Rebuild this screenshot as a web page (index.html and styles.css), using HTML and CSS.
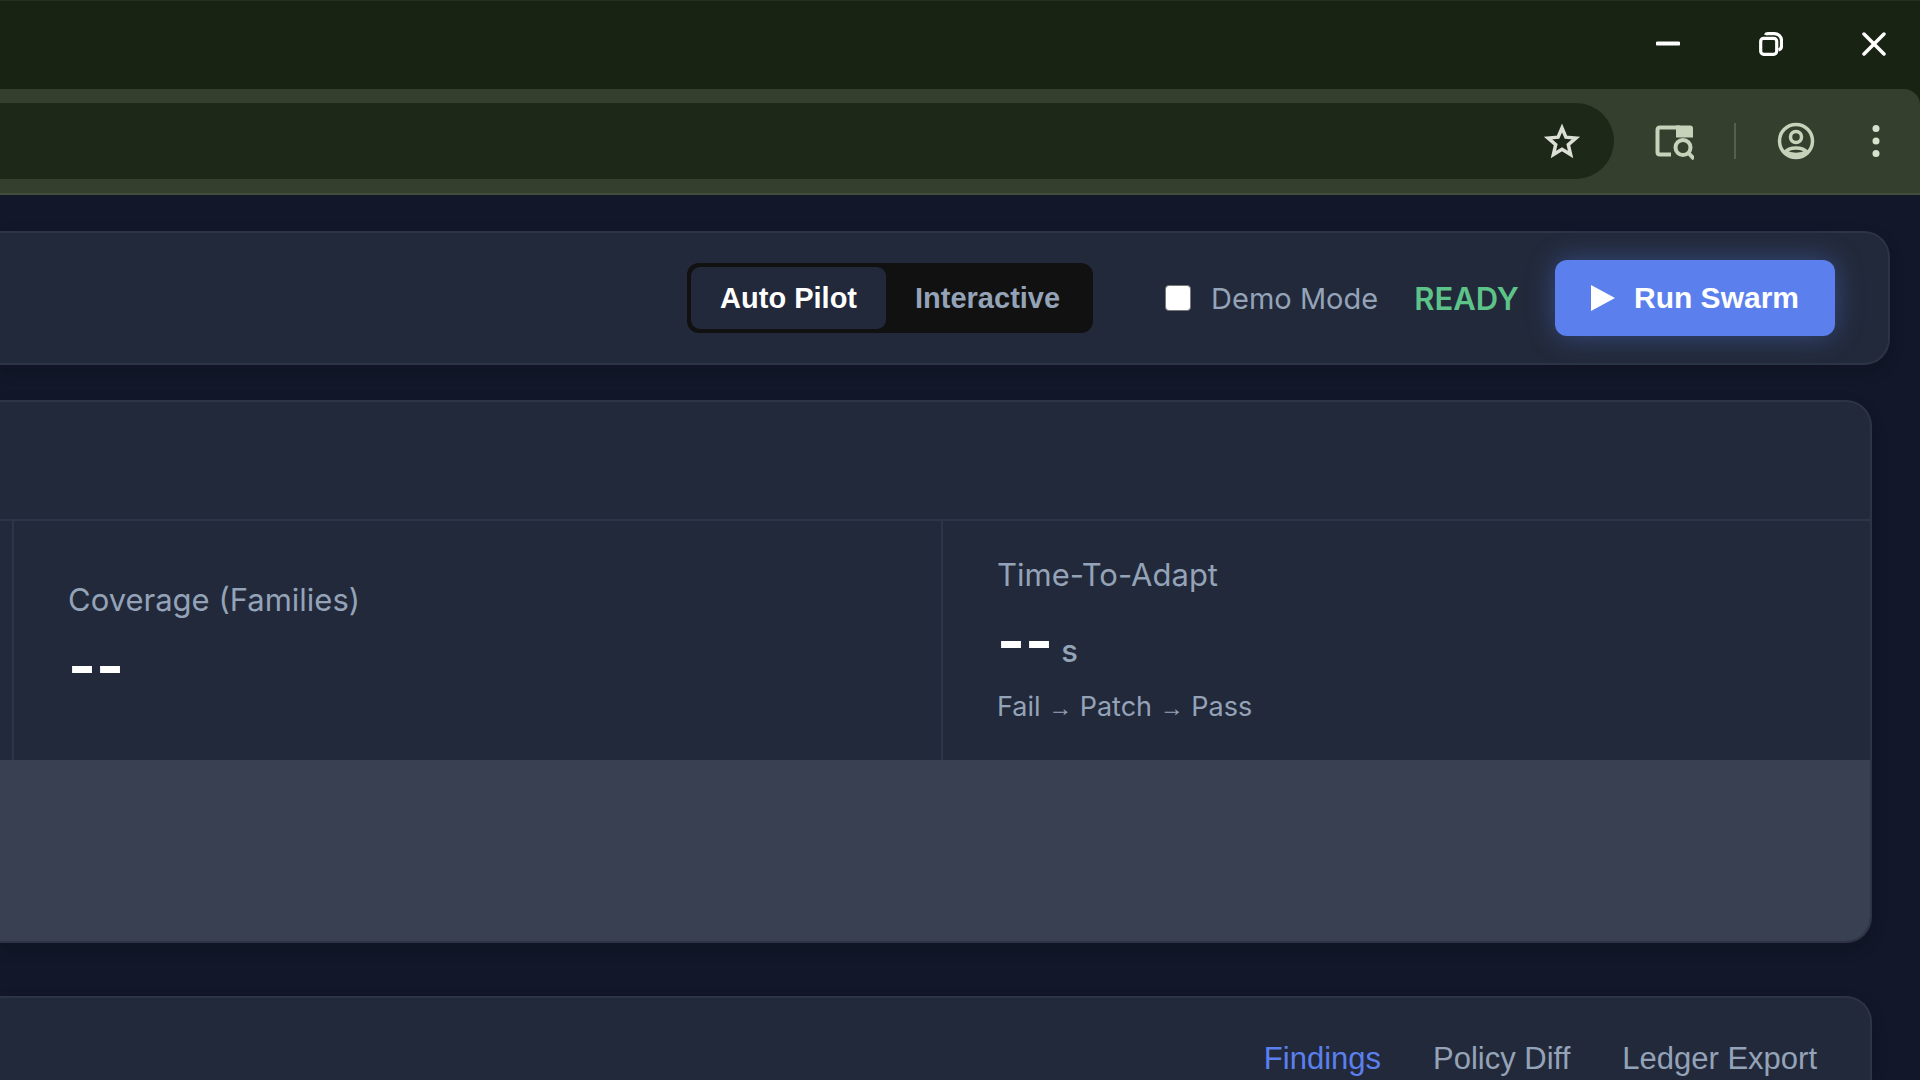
FILE: index.html
```html
<!DOCTYPE html>
<html lang="en">
<head>
    <meta charset="UTF-8">
    <title>Swarm Dashboard</title>
    <link rel="stylesheet" href="styles.css">
</head>
<body>
    <div class="titlebar">
        <button class="icon-btn" aria-label="Minimize">
            <svg width="24" height="24" viewBox="0 0 24 24"><path d="M1.500 11.500h21" stroke="#fff" stroke-width="4" stroke-linecap="round"/></svg>
        </button>
        <button class="icon-btn" aria-label="Restore">
            <svg width="24" height="24" viewBox="0 0 24 24" fill="none" stroke="#fff" stroke-width="3.200"><rect x="1.700" y="6.300" width="16" height="16" rx="3"/><path d="M6.500 3Q7 1.600 9 1.600h6.500a7 7 0 0 1 7 7v5.500q0 3-3 4"/></svg>
        </button>
        <button class="icon-btn" aria-label="Close">
            <svg width="24" height="24" viewBox="0 0 24 24"><path d="M2 2l20 20M22 2l-20 20" stroke="#fff" stroke-width="3.500" stroke-linecap="round"/></svg>
        </button>
    </div>

    <div class="toolbar-wrap">
    <div class="toolbar">
        <div class="omnibox">
            <button class="icon-btn" aria-label="Bookmark this tab">
                <svg width="40" height="40" viewBox="0 0 40 40" fill="none" stroke="#dbdfd6" stroke-width="3.500"><path d="M20 7l3.900 9.200 10 .9-7.600 6.600 2.300 9.800-8.600-5.200-8.600 5.200 2.300-9.800-7.600-6.600 10-.9z"/></svg>
            </button>
        </div>
        <button class="icon-btn" aria-label="Search tabs">
            <svg width="40" height="40" viewBox="0 0 40 40" fill="none" stroke="#c6d2b9" stroke-width="4"><path d="M17 33.500H6q-2.500 0-2.500-2.500V9q0-2.500 2.500-2.500h20"/><path d="M22 4.500h14q3 0 3 3v9H22z" fill="#c6d2b9" stroke="none"/><circle cx="29" cy="26.500" r="7.500"/><path d="M34 31.500l6 6.500"/></svg>
        </button>
        <span class="separator"></span>
        <button class="icon-btn" aria-label="Profile">
            <svg width="40" height="40" viewBox="0 0 40 40" fill="none" stroke="#c6d2b9" stroke-width="3.500"><circle cx="20" cy="20" r="16.500"/><circle cx="20" cy="16" r="5.500"/><path d="M8.500 31.500c5-6 18-6 23 0M9 30.500c6 4 16 4 22 0"/></svg>
        </button>
        <button class="icon-btn" aria-label="Menu">
            <svg width="40" height="40" viewBox="0 0 40 40" fill="#d7e2cc"><circle cx="20" cy="7.500" r="3.500"/><circle cx="20" cy="20" r="3.500"/><circle cx="20" cy="32.500" r="3.500"/></svg>
        </button>
    </div>
    </div>

    <main>
        <header class="topbar">
            <div class="mode-toggle">
                <button class="mode active">Auto Pilot</button>
                <button class="mode">Interactive</button>
            </div>
            <label class="demo" for="demoMode"><input type="checkbox" id="demoMode">Demo Mode</label>
            <span class="status">READY</span>
            <button class="run-btn">
                <svg width="24" height="26" viewBox="0 0 24 26"><path d="M0 0l24 13-24 13z" fill="#fff"/></svg>
                Run Swarm
            </button>
        </header>

        <section class="panel metrics">
            <div class="panel-head"></div>
            <div class="metric-grid">
                <div class="metric"></div>
                <div class="metric">
                    <div class="metric-label">Coverage (Families)</div>
                    <div class="metric-value">--</div>
                </div>
                <div class="metric">
                    <div class="metric-label">Time-To-Adapt</div>
                    <div class="metric-value">--<span class="unit">s</span></div>
                    <div class="metric-note">Fail <span class="arrow">→</span> Patch <span class="arrow">→</span> Pass</div>
                </div>
            </div>
            <div class="metric-rest"></div>
        </section>

        <section class="panel results">
            <nav class="tabs">
                <button class="tab active">Findings</button>
                <button class="tab">Policy Diff</button>
                <button class="tab">Ledger Export</button>
            </nav>
        </section>
    </main>
</body>
</html>
```

FILE: styles.css
```css
* {
    box-sizing: border-box;
}

body {
    display: flex;
    flex-direction: column;
    margin: 0;
    height: 100vh;
    overflow: hidden;
    background: #121729;
    color: #94a3b8;
    font-family: Inter, "Liberation Sans", sans-serif;
}

button {
    border: none;
    background: none;
    padding: 0;
    cursor: pointer;
    font-family: "Liberation Sans", Arial, sans-serif;
}

.icon-btn,
.icon-btn svg {
    display: block;
}

/* browser window */
.titlebar {
    display: flex;
    flex-shrink: 0;
    justify-content: flex-end;
    align-items: center;
    gap: 79px;
    height: 89px;
    padding: 0 34px 2px 0;
    background: #192313;
    border-top: 1px solid #27301f;
}

.toolbar-wrap {
    flex-shrink: 0;
    background: #192313;
}

.toolbar {
    display: flex;
    align-items: center;
    gap: 40px;
    height: 106px;
    padding-right: 24px;
    background: #353f2e;
    border-bottom: 2px solid #434b3d;
    border-top-right-radius: 16px;
}

.omnibox {
    flex: 1;
    display: flex;
    justify-content: flex-end;
    align-items: center;
    height: 76px;
    padding-right: 32px;
    background: #1e2819;
    border-radius: 0 38px 38px 0;
}

.separator {
    width: 2px;
    height: 36px;
    background: #53604a;
}

/* dashboard */
main {
    flex: 1;
    display: flex;
    flex-direction: column;
    min-height: 0;
    padding-top: 36px;
}

.topbar {
    display: flex;
    flex-shrink: 0;
    justify-content: flex-end;
    align-items: center;
    gap: 36px;
    height: 134px;
    margin-right: 30px;
    padding-right: 53px;
    background: #22293a;
    border: 2px solid #2c3446;
    border-left: none;
    border-radius: 0 26px 26px 0;
    box-shadow: 0 6px 16px rgba(0, 0, 0, 0.15);
}

.mode-toggle {
    display: flex;
    height: 70px;
    margin-right: 36px;
    padding: 4px;
    background: #111;
    border-radius: 12px;
}

.mode {
    padding: 0 29px;
    border-radius: 9px;
    color: #94a3b8;
    font-size: 29px;
    font-weight: bold;
}

.mode.active {
    background: #22293a;
    color: #fff;
}

.demo {
    display: flex;
    align-items: center;
    gap: 20px;
    font-size: 29px;
}

.demo input {
    appearance: none;
    width: 26px;
    height: 26px;
    margin: 0;
    background: #fff;
    border: 1px solid #767676;
    border-radius: 4px;
}

.demo input:checked {
    background: #5b80ee;
}

.status {
    color: #5dc389;
    font-size: 31px;
    font-weight: 600;
}

.run-btn {
    display: flex;
    align-items: center;
    gap: 19px;
    height: 76px;
    padding: 0 36px;
    background: #5b80ee;
    border-radius: 12px;
    box-shadow: 0 0 28px rgba(91, 128, 238, 0.4);
    color: #fff;
    font-size: 30px;
    font-weight: bold;
}

.panel {
    flex-shrink: 0;
    margin-right: 48px;
    background: #22293a;
    border: 2px solid #2c3446;
    border-left: none;
    border-radius: 0 26px 26px 0;
    box-shadow: 0 6px 16px rgba(0, 0, 0, 0.15);
    overflow: hidden;
}

.metrics {
    margin-top: 35px;
}

.panel-head {
    height: 119px;
    border-bottom: 2px solid #2c3648;
}

.metric-grid {
    display: grid;
    grid-template-columns: 12px 1fr 1fr;
    gap: 2px;
    height: 239px;
    background: #2c3648;
}

.metric {
    display: flex;
    flex-direction: column;
    justify-content: center;
    background: #22293a;
}

.metric + .metric {
    padding: 0 54px;
}

.metric-label {
    font-size: 31px;
    line-height: 38px;
}

.metric-value {
    margin-top: 10px;
    color: #fff;
    font-size: 60px;
    font-weight: 700;
    line-height: 72px;
}

.unit {
    margin-left: 8px;
    color: #94a3b8;
    font-size: 31px;
    font-weight: 500;
}

.metric-note {
    margin-top: 2px;
    font-size: 27px;
    line-height: 36px;
}

.arrow {
    font-family: "Liberation Sans", Arial, sans-serif;
    font-size: 24px;
}

.metric-rest {
    height: 181px;
    background: #384052;
}

.results {
    flex: 1;
    margin-top: 53px;
    border-bottom: none;
    border-bottom-right-radius: 0;
}

.tabs {
    display: flex;
    justify-content: flex-end;
    gap: 52px;
    padding: 43px 53px 0 0;
}

.tab {
    color: #94a3b8;
    font-size: 31px;
    line-height: 36px;
}

.tab.active {
    color: #5b80ee;
}
```
